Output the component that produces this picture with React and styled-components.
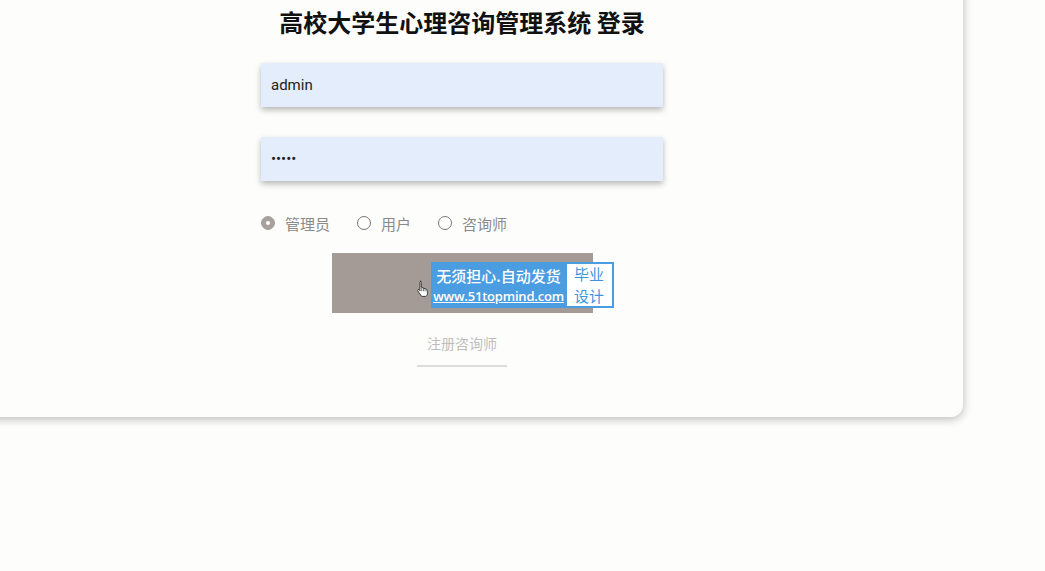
import React from "react"
import styled, { createGlobalStyle } from "styled-components"

const Global = createGlobalStyle`
  html, body {
    margin: 0;
    padding: 0;
    background: #fdfdfb;
    font-family: "Liberation Sans", Arial, "Noto Sans CJK SC", sans-serif;
  }
`

const roles = [
  { label: "管理员", checked: true },
  { label: "用户", checked: false },
  { label: "咨询师", checked: false },
]

const App = () => {
  return (
    <Page>
      <Global />
      <Card>
        <Title>高校大学生心理咨询管理系统 登录</Title>
        <Field value="admin" readOnly />
        <Field type="password" value="admin" readOnly />
        <RoleRow>
          {roles.map((r) => (
            <RoleOption key={r.label}>
              <RadioDot $checked={r.checked} />
              <span>{r.label}</span>
            </RoleOption>
          ))}
        </RoleRow>
        <ButtonWrap>
          <LoginButton />
          <Cursor viewBox="0 0 14 18" width="13" height="17">
            <path
              d="M4.5 1.2c.7 0 1.2.5 1.2 1.2v5.4l.2-.1c.6-.2 1.3.1 1.5.7.6-.3 1.3 0 1.5.6.6-.3 1.4 0 1.6.7.6-.2 1.3.2 1.4.8l.4 3.4c.1 1.5-.4 2.6-1.6 3.6H6.2c-.7-.8-1.6-2-2.6-3.6L2 11.6c-.4-.6-.2-1.3.4-1.5.5-.2 1 0 1.3.4l.6.9V2.4c0-.7.5-1.2 1.2-1.2z"
              fill="#fff"
              stroke="#222"
              strokeWidth="0.9"
            />
            <path d="M6.2 8v4M8 8.5v3.5M9.8 9.2v2.8" stroke="#222" strokeWidth="0.7" />
          </Cursor>
          <Badge>
            <BadgeMain>
              <BadgeSlogan>无须担心.自动发货</BadgeSlogan>
              <BadgeLink>www.51topmind.com</BadgeLink>
            </BadgeMain>
            <BadgeSide>
              <SideLine>毕业</SideLine>
              <SideLine>设计</SideLine>
            </BadgeSide>
          </Badge>
        </ButtonWrap>
        <RegisterLink>注册咨询师</RegisterLink>
      </Card>
    </Page>
  )
}

export default App

// Styling
const Page = styled.div`
  width: 1045px;
  height: 571px;
  overflow: hidden;
`

const Card = styled.div`
  width: 1002px;
  margin: -20px 0 0 -39px;
  padding: 30px 0 50px;
  box-sizing: border-box;
  background: #fdfdfb;
  border-radius: 0 0 12px 0;
  box-shadow: 0 2px 10px rgba(0, 0, 0, 0.28);
  display: flex;
  flex-direction: column;
  align-items: center;
`

const Title = styled.h1`
  margin: 0 0 29px;
  font-family: "Noto Sans CJK SC", sans-serif;
  font-size: 24px;
  line-height: 24px;
  font-weight: 700;
  color: #111;
`

const Field = styled.input`
  width: 402px;
  height: 44px;
  box-sizing: border-box;
  margin: 0 0 30px;
  padding: 0 10px;
  border: none;
  outline: none;
  background: #e4edfb;
  box-shadow: 0 3px 6px rgba(0, 0, 0, 0.28);
  font-family: Roboto, "Liberation Sans", sans-serif;
  font-size: 15px;
  color: #222;
`

const RoleRow = styled.div`
  width: 402px;
  display: flex;
  gap: 27px;
  height: 24px;
  align-items: center;
`

const RoleOption = styled.label`
  display: flex;
  align-items: center;
  gap: 10px;
  font-family: "Noto Sans CJK SC", sans-serif;
  font-size: 15px;
  color: #8a8a8a;
`

const RadioDot = styled.span`
  width: 14px;
  height: 14px;
  box-sizing: border-box;
  border-radius: 50%;
  border: 1px solid ${(p) => (p.$checked ? "#a8a09c" : "#777")};
  background: ${(p) => (p.$checked ? "#a8a09c" : "#fff")};
  display: flex;
  align-items: center;
  justify-content: center;
  &::after {
    content: "";
    width: 4px;
    height: 4px;
    border-radius: 50%;
    background: ${(p) => (p.$checked ? "#fff" : "transparent")};
  }
`

const ButtonWrap = styled.div`
  position: relative;
  margin-top: 18px;
`

const LoginButton = styled.div`
  width: 261px;
  height: 60px;
  background: #a59b96;
`

const Cursor = styled.svg`
  position: absolute;
  left: 84px;
  top: 27px;
`

const Badge = styled.div`
  position: absolute;
  left: 99px;
  top: 9px;
  display: flex;
  height: 46px;
`

const BadgeMain = styled.div`
  width: 136px;
  background: #4a9de0;
  color: #fff;
  display: flex;
  flex-direction: column;
  align-items: center;
  justify-content: center;
  gap: 3px;
`

const BadgeSlogan = styled.span`
  display: block;
  font-family: "Noto Sans CJK SC", sans-serif;
  font-size: 15px;
  line-height: 18px;
  font-weight: 500;
  white-space: nowrap;
`

const BadgeLink = styled.span`
  display: block;
  font-family: "Open Sans", "Noto Sans", sans-serif;
  font-size: 13px;
  line-height: 16px;
  font-weight: 600;
  text-decoration: underline;
  white-space: nowrap;
  letter-spacing: -0.2px;
`

const BadgeSide = styled.div`
  width: 47px;
  box-sizing: border-box;
  border: 2px solid #4a9de0;
  border-left: none;
  background: #fff;
  color: #3f95db;
  display: flex;
  flex-direction: column;
  align-items: center;
  justify-content: center;
`

const SideLine = styled.span`
  display: block;
  flex: none;
  font-family: "Noto Sans CJK SC", sans-serif;
  font-size: 15px;
  line-height: 22px;
  height: 22px;
`

const RegisterLink = styled.div`
  margin-top: 20px;
  width: 90px;
  padding-bottom: 12px;
  border-bottom: 2px solid #dcdcdc;
  text-align: center;
  font-family: "Noto Sans CJK SC", sans-serif;
  font-size: 14px;
  line-height: 20px;
  color: #bdbdbd;
`
